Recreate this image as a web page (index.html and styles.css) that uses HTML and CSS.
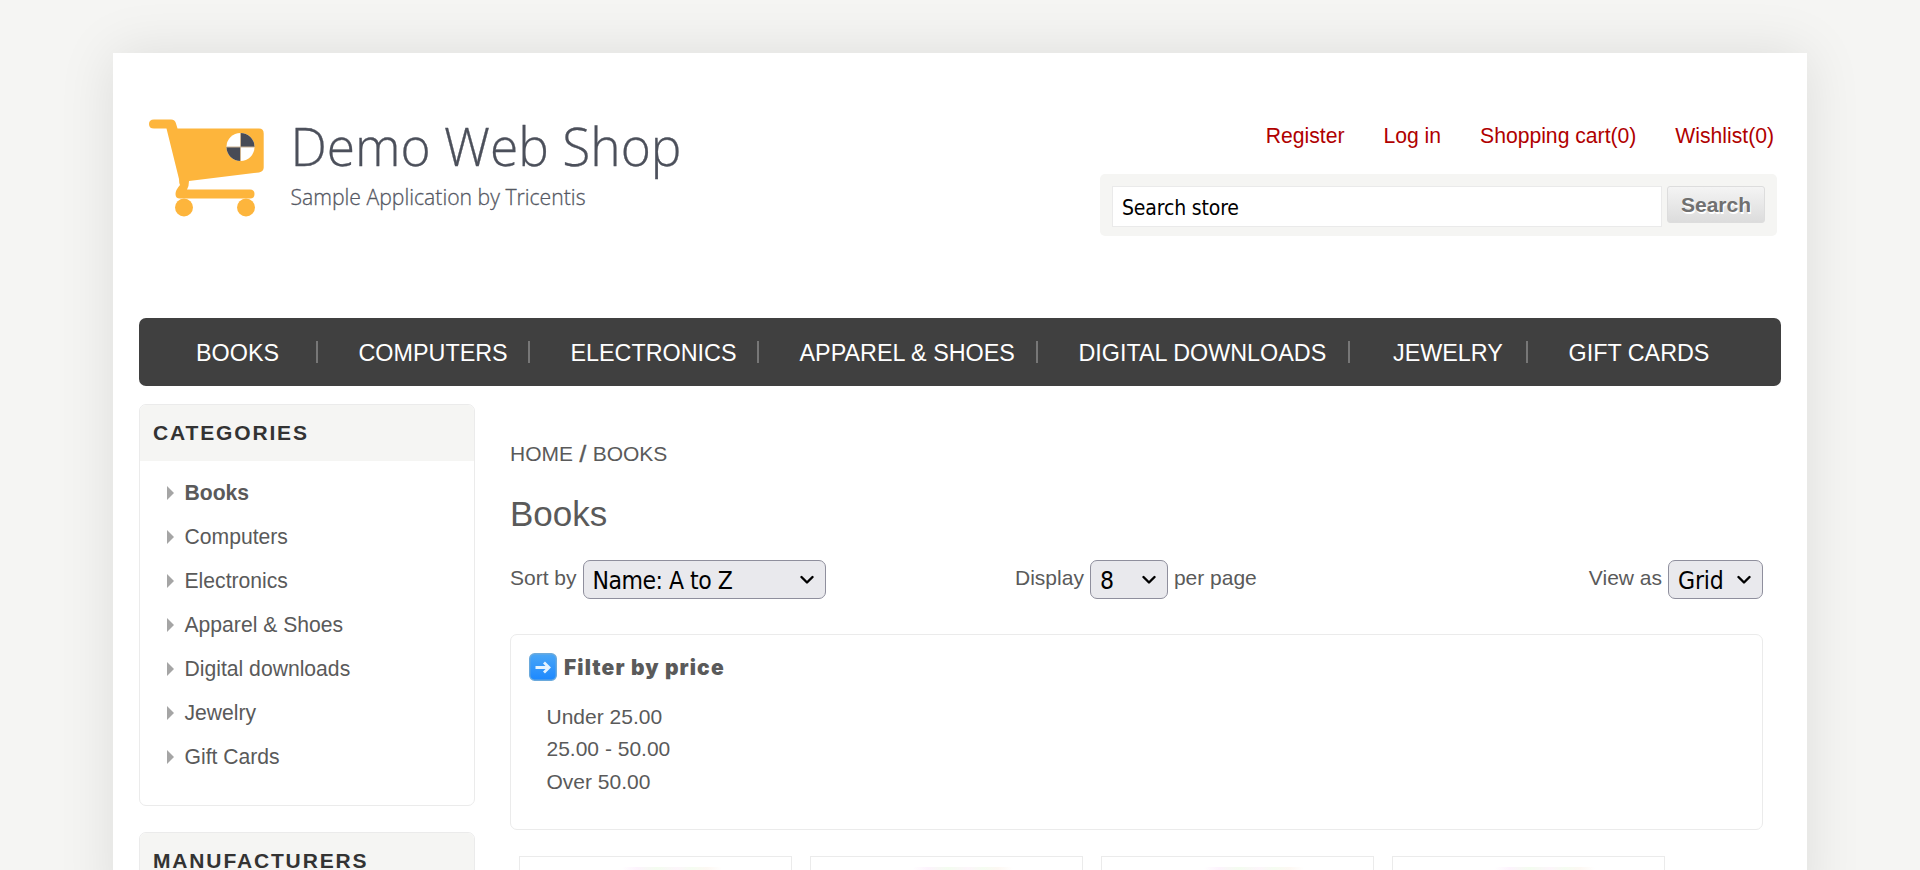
FILE: index.html
```html
<!DOCTYPE html>
<html lang="en">
<head>
<meta charset="utf-8">
<title>Demo Web Shop. Books</title>
<link rel="stylesheet" href="styles.css">
</head>
<body>
<div class="page">
  <header class="header">
    <a class="logo">
      <svg width="570" height="120" viewBox="139 109 570 120">
        <g fill="#fdb53c">
          <path d="M154 119.500h17q4 0 5 4l1.500 5h81.500q4.700 0 4.700 5v34q0 4-4.700 5l-70 8.500q0 5-2 8.500h63q4.500 0 4.500 4.500t-4.500 4.500h-70q-4.500 0-4.500-4.500q0-4 4.500-9q-1-2-1-6l-12.500-50.500h-12.500q-5 0-5-4.500t5-4.500z"/>
          <circle cx="184" cy="207.500" r="9"/><circle cx="246" cy="207.500" r="9"/>
        </g>
        <circle cx="240.500" cy="147" r="14" fill="#fff"/>
        <path d="M240.500 133a14 14 0 0 1 14 14h-14zM240.500 147v14a14 14 0 0 1-14-14z" fill="#474b56"/>
        <path d="M240.500 133v28M226.500 147h28" stroke="#cbb393" stroke-width="1"/>
        <text class="logo-name" x="290.500" y="165.500" textLength="391" lengthAdjust="spacingAndGlyphs">Demo Web Shop</text>
        <text class="logo-sub" x="290.500" y="205" textLength="295" lengthAdjust="spacingAndGlyphs">Sample Application by Tricentis</text>
      </svg>
    </a>
    <div class="tools">
      <nav class="links"><a>Register</a><a>Log in</a><a>Shopping cart(0)</a><a>Wishlist(0)</a></nav>
      <div class="search"><div class="search-input"><span>Search store</span></div><div class="search-button">Search</div></div>
    </div>
  </header>
  <nav class="menu">
    <a class="m-books">BOOKS</a><a class="m-computers">COMPUTERS</a><a class="m-electronics">ELECTRONICS</a><a class="m-apparel">APPAREL &amp; SHOES</a><a class="m-digital">DIGITAL DOWNLOADS</a><a class="m-jewelry">JEWELRY</a><a class="m-gift">GIFT CARDS</a>
  </nav>
  <div class="columns">
    <aside class="side">
      <section class="block">
        <h2>CATEGORIES</h2>
        <ul><li class="active">Books</li><li>Computers</li><li>Electronics</li><li>Apparel &amp; Shoes</li><li>Digital downloads</li><li>Jewelry</li><li>Gift Cards</li></ul>
      </section>
      <section class="block"><h2>MANUFACTURERS</h2></section>
    </aside>
    <main class="main">
      <div class="crumbs"><span>HOME</span><b>/</b><span>BOOKS</span></div>
      <h1>Books</h1>
      <div class="selectors">
        <div class="sel-group"><span>Sort by</span><div class="select s-sort"><span>Name: A to Z</span><svg width="14" height="10" viewBox="0 0 14 10"><path d="M1.500 2l5.500 5.500L12.500 2"/></svg></div></div>
        <div class="sel-group g-size"><span>Display</span><div class="select s-size"><span>8</span><svg width="14" height="10" viewBox="0 0 14 10"><path d="M1.500 2l5.500 5.500L12.500 2"/></svg></div><span>per page</span></div>
        <div class="sel-group g-view"><span>View as</span><div class="select s-view"><span>Grid</span><svg width="14" height="10" viewBox="0 0 14 10"><path d="M1.500 2l5.500 5.500L12.500 2"/></svg></div></div>
      </div>
      <section class="filter">
        <div class="filter-title">
          <svg width="28" height="28" viewBox="0 0 28 28">
            <defs><linearGradient id="blue" x1="0" y1="0" x2="0" y2="1"><stop offset="0" stop-color="#4aa6f6"/><stop offset="1" stop-color="#1c88ff"/></linearGradient></defs>
            <rect x=".700" y=".700" width="26.600" height="26.600" rx="5" fill="url(#blue)" stroke="#6aa9dc" stroke-width="1.400"/>
            <path d="M6.500 14.500h13M15 9.500l5 5-5 5" fill="none" stroke="#e4f3ff" stroke-width="2.800"/>
          </svg>
          <span>Filter by price</span>
        </div>
        <ul><li>Under 25.00</li><li>25.00 - 50.00</li><li>Over 50.00</li></ul>
      </section>
      <div class="grid"><div class="card"></div><div class="card"></div><div class="card"></div><div class="card"></div></div>
    </main>
  </div>
</div>
</body>
</html>
```

FILE: styles.css
```css
* { box-sizing: border-box; }
html { height: 870px; overflow: hidden; }
body {
  margin: 0; padding-top: 53px; height: 870px; overflow: hidden;
  background: #f5f5f3; color: #5a5a5a;
  font: 21px/24px "Liberation Sans", Arial, sans-serif;
}
ul, h1, h2 { margin: 0; padding: 0; list-style: none; }
.page { width: 1694px; height: 860px; margin: 0 auto; padding: 0 26px; background: #fff; box-shadow: 0 0 53px rgba(0,0,0,.1); }
.header { height: 265px; display: flex; justify-content: space-between; }
.logo { padding-top: 56px; }
.logo svg { display: block; }
.logo-name { font: 300 53px "Open Sans", sans-serif; fill: #4c505b; stroke: #4c505b; stroke-width: .3px; }
.logo-sub { font: 300 21.5px "Open Sans", sans-serif; fill: #555863; stroke: #555863; stroke-width: .3px; }
.tools { width: 677px; margin-right: 4px; padding-top: 71px; }
.links { display: flex; justify-content: flex-end; gap: 39px; padding-right: 3px; color: #b00000; white-space: nowrap; height: 50px; font-size: 21.15px; }
.search { height: 62px; background: #f5f5f3; border-radius: 5px; padding: 12px 12px 0 12px; display: flex; align-items: flex-start; gap: 5px; }
.search-input { width: 550px; height: 41px; border: 1px solid #eaeaea; background: #fff; color: #000; padding: 8px 9px; font: 21px/26px "DejaVu Sans Condensed", "DejaVu Sans", sans-serif; font-stretch: condensed; letter-spacing: -.15px; }
.search-button { width: 98px; height: 37px; border: 1px solid #ddd; border-radius: 3px; background: linear-gradient(#f4f4f4, #dcdcdc); text-align: center; font-weight: bold; line-height: 36px; color: #707070; text-shadow: 1px 2px 0 #fff; }
.menu { height: 68px; background: #404040; border-radius: 7px; display: flex; align-items: flex-start; padding: 23px 0 0 15px; color: #fff; font-size: 23.35px; white-space: nowrap; }
.menu a { height: 22px; line-height: 24px; padding-left: 40.5px; border-right: 2px solid #777; }
.menu .m-books { width: 164px; padding-left: 42px; }
.m-computers { width: 212px; }
.m-electronics { width: 229px; }
.m-apparel { width: 279px; }
.m-digital { width: 312px; }
.menu .m-jewelry { width: 178px; padding-left: 43px; }
.menu .m-gift { border-right: 0; }
.columns { display: flex; gap: 35px; padding-top: 18px; }
.side { width: 336px; display: flex; flex-direction: column; gap: 26px; }
.block { border: 1px solid #ebebeb; border-radius: 7px; overflow: hidden; }
.block h2 { height: 56px; padding: 16px 0 0 13px; background: #f5f5f3; color: #333; font-size: 21px; line-height: 24px; letter-spacing: 1.85px; }
.block ul { height: 344px; padding: 10px 0 0 27px; }
.block li { height: 44px; line-height: 44px; display: flex; align-items: center; gap: 10.5px; font-size: 21.15px; }
.block li::before { content: ""; border: solid transparent; border-width: 7.5px 0 7.5px 7.5px; border-left-color: #a5a5a5; }
.active { font-weight: bold; }
.main { width: 1253px; padding-top: 38px; }
.crumbs { display: flex; gap: 6.5px; line-height: 24px; }
.crumbs b { font-size: 24px; font-weight: normal; -webkit-text-stroke: .5px #5a5a5a; }
h1 { font-size: 35px; line-height: 40px; font-weight: normal; margin-top: 28px; }
.selectors { display: flex; height: 39px; margin-top: 26px; }
.sel-group { display: flex; gap: 6px; line-height: 36px; white-space: nowrap; }
.g-size { margin-left: 189.5px; }
.g-view { margin-left: auto; }
.select { height: 39px; border: 1px solid #8f8f9d; border-radius: 7px; background: #e9e9ed; color: #000; display: flex; align-items: center; justify-content: space-between; padding: 1px 11px 0 9px; font: 24.5px/37px "DejaVu Sans Condensed", "DejaVu Sans", sans-serif; font-stretch: condensed; letter-spacing: -.5px; }
.select svg { fill: none; stroke: #000; stroke-width: 2.4; stroke-linecap: round; stroke-linejoin: round; }
.s-sort { width: 243px; }
.s-size { width: 78px; }
.s-view { width: 95px; }
.s-view span { letter-spacing: -.2px; }
.filter { height: 196px; margin-top: 35px; border: 1px solid #ebebeb; border-radius: 7px; padding: 18px 18px 0; }
.filter-title { display: flex; gap: 7px; align-items: center; height: 28px; font: 900 21px/28px Inter, sans-serif; letter-spacing: 1.1px; }
.filter-title span { padding-top: 1px; }
.filter ul { padding: 19.5px 0 0 17.5px; line-height: 32.5px; }
.grid { display: flex; gap: 17.500px; margin: 26px 0 0 8.500px; }
.card { width: 273.500px; height: 40px; border: 1px solid #ebebeb; background: linear-gradient(90deg, #fff, #fdf3fd 15%, #f3fdef 35%, #fdf5fb 55%, #f5fdf1 70%, #fdf8f3 85%, #fff) 60% 10px / 100px 3px no-repeat; }
```
